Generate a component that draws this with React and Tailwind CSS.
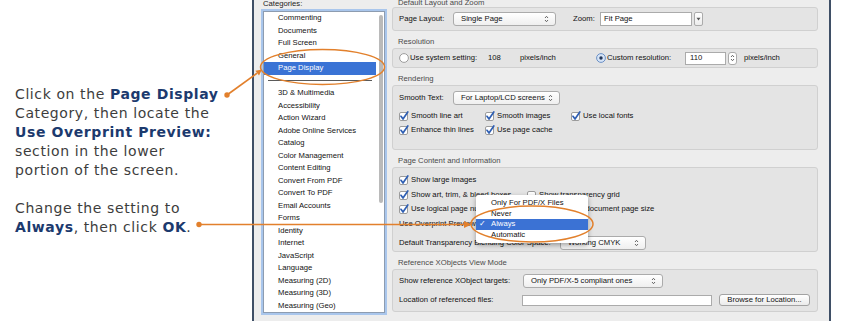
import React from "react";

const ORANGE = "#e2802c";

const Check = ({ on = true }) => (
  <svg width="10" height="10" viewBox="0 0 10 10" className="shrink-0">
    <rect x="0.5" y="1.5" width="8" height="8" rx="1.5" fill="#fff" stroke="#9c9c9c" />
    {on && (
      <path d="M2 5.3 L4 8 L8.8 0.9" fill="none" stroke="#2f5fb3" strokeWidth="1.7" strokeLinecap="round" strokeLinejoin="round" />
    )}
  </svg>
);

const Radio = ({ on }) => (
  <svg width="10" height="10" viewBox="0 0 10 10" className="shrink-0">
    <circle cx="5" cy="5" r="4.4" fill={on ? "#d6e4f6" : "#fff"} stroke={on ? "#6b90c6" : "#9c9c9c"} />
    {on && <circle cx="5" cy="5" r="1.7" fill="#24385a" />}
  </svg>
);

const UpDown = () => (
  <svg width="5" height="8" viewBox="0 0 5 8" className="shrink-0">
    <path d="M1 3 L2.5 1.3 L4 3" fill="none" stroke="#555" strokeWidth="0.9" />
    <path d="M1 5 L2.5 6.7 L4 5" fill="none" stroke="#555" strokeWidth="0.9" />
  </svg>
);

const Select = ({ className, children }) => (
  <div className={`flex h-[14px] shrink-0 items-center justify-between rounded-[3px] border border-[#ababab] bg-gradient-to-b from-white to-[#efefef] pl-[7px] pr-[6px] text-[#111] ${className}`}>
    <span>{children}</span>
    <UpDown />
  </div>
);

const Label = ({ first, children }) => (
  <div className={first ? "mt-[-1px] flex h-[8px] items-end pl-[6px] leading-[9px] text-[#4a4a4a]" : "flex h-[17px] items-end pb-[1px] pl-[6px] leading-[10px] text-[#4a4a4a]"}>
    {children}
  </div>
);

const CheckItem = ({ on, className, children }) => (
  <div className={`flex shrink-0 items-center gap-[2px] ${className}`}>
    <Check on={on} />
    <span>{children}</span>
  </div>
);

const topCats = ["Commenting", "Documents", "Full Screen", "General"];
const otherCats = [
  "3D & Multimedia", "Accessibility", "Action Wizard", "Adobe Online Services", "Catalog",
  "Color Management", "Content Editing", "Convert From PDF", "Convert To PDF", "Email Accounts",
  "Forms", "Identity", "Internet", "JavaScript", "Language", "Measuring (2D)", "Measuring (3D)",
  "Measuring (Geo)",
];

const Annotations = () => (
  <svg className="pointer-events-none absolute left-0 top-0" width="845" height="321" viewBox="0 0 845 321">
    <ellipse cx="322.5" cy="67" rx="62" ry="17.5" fill="none" stroke={ORANGE} strokeWidth="1.5" />
    <ellipse cx="532" cy="224" rx="61" ry="18" fill="none" stroke={ORANGE} strokeWidth="1.5" />
    <circle cx="227" cy="95" r="2.7" fill={ORANGE} />
    <line x1="227" y1="95" x2="257.2" y2="73.1" stroke={ORANGE} strokeWidth="1.7" />
    <polygon points="262,69.5 259,75.5 255.4,70.7" fill={ORANGE} />
    <circle cx="199" cy="224.5" r="2.7" fill={ORANGE} />
    <line x1="199" y1="224.5" x2="465" y2="224.5" stroke={ORANGE} strokeWidth="1.7" />
    <polygon points="471.5,224.5 464,221 464,228" fill={ORANGE} />
  </svg>
);

export default function App() {
  return (
    <div className="relative flex h-[321px] w-[845px] overflow-hidden bg-white">
      {/* instructions */}
      <div className="w-[252px] shrink-0 pl-[15px] pt-[85px] font-['DejaVu_Sans',sans-serif] text-[14px] leading-[19px] tracking-[0.6px] text-[#3d3d3d]">
        <p>
          Click on the <b className="text-[#1c3a6e]">Page Display</b>
          <br />
          Category, then locate the
          <br />
          <b className="text-[#1c3a6e]">Use Overprint Preview:</b>
          <br />
          section in the lower
          <br />
          portion of the screen.
        </p>
        <p className="mt-[19px]">
          Change the setting to
          <br />
          <b className="text-[#1c3a6e]">Always</b>, then click <b className="text-[#1c3a6e]">OK</b>.
        </p>
      </div>

      {/* preferences window */}
      <div className="flex h-full w-[579px] shrink-0 border-x-2 border-[#3f4f66] bg-[#ededed] pl-[9px] pr-[11px] font-['Liberation_Sans',Arial,sans-serif] text-[7.7px] text-[#111]">
        <div className="flex w-[122px] shrink-0 flex-col">
          <div className="mt-[-2px] h-[13px] leading-[11px] text-[#222]">Categories:</div>
          <div className="relative h-[302px] border border-[#8d9cb0] bg-white ring-2 ring-[#a9c6ec]">
            {topCats.map((c) => (
              <div key={c} className="h-[12.5px] pl-[14px] leading-[12.5px]">{c}</div>
            ))}
            <div className="h-[12.5px] w-[112px] bg-[#3a73d5] pl-[14px] leading-[12.5px] text-white">Page Display</div>
            <div className="flex h-[12.5px] items-center pl-[4px]">
              <div className="h-px w-[104px] bg-[#5a5a5a]" />
            </div>
            {otherCats.map((c) => (
              <div key={c} className="h-[12.5px] pl-[14px] leading-[12.5px]">{c}</div>
            ))}
            <div className="absolute right-[1px] top-[3px] h-[188px] w-[4px] rounded-full bg-[#bababa]" />
          </div>
        </div>

        <div className="ml-[7px] flex w-[426px] shrink-0 flex-col">
          <Label first>Default Layout and Zoom</Label>
          <div className="flex h-[24px] items-center rounded-[3px] border border-[#d0d0d0] bg-[#e4e4e4] pl-[6px]">
            <span className="w-[54px] shrink-0">Page Layout:</span>
            <Select className="w-[103px]">Single Page</Select>
            <span className="ml-[17px] w-[27px] shrink-0">Zoom:</span>
            <div className="flex h-[14px] w-[103px] shrink-0 items-center gap-[2px]">
              <div className="flex h-full flex-1 items-center border border-[#ababab] bg-white pl-[3px]">Fit Page</div>
              <div className="flex h-full w-[9px] items-center justify-center rounded-[2px] border border-[#ababab] bg-gradient-to-b from-white to-[#ececec]">
                <svg width="5" height="4" viewBox="0 0 5 4"><path d="M0.5 0.8 L4.5 0.8 L2.5 3.5 Z" fill="#555" /></svg>
              </div>
            </div>
          </div>

          <Label>Resolution</Label>
          <div className="flex h-[20px] items-center rounded-[3px] border border-[#d0d0d0] bg-[#e4e4e4] pl-[6px]">
            <Radio />
            <span className="ml-[1px] w-[78px] shrink-0">Use system setting:</span>
            <span className="w-[32px] shrink-0">108</span>
            <span className="w-[76px] shrink-0">pixels/inch</span>
            <Radio on />
            <span className="ml-[1px] w-[78px] shrink-0">Custom resolution:</span>
            <div className="flex h-[13px] w-[41px] shrink-0 items-center border border-[#ababab] bg-white pl-[4px]">110</div>
            <div className="ml-[2px] flex h-[13px] w-[9px] shrink-0 items-center justify-center rounded-[3px] border border-[#ababab] bg-white">
              <UpDown />
            </div>
            <span className="ml-[7px]">pixels/inch</span>
          </div>

          <Label>Rendering</Label>
          <div className="flex h-[65px] flex-col rounded-[3px] border border-[#d0d0d0] bg-[#e4e4e4] pl-[6px] pt-[5px]">
            <div className="flex h-[14px] items-center">
              <span className="w-[54px] shrink-0">Smooth Text:</span>
              <Select className="w-[107px]">For Laptop/LCD screens</Select>
            </div>
            <div className="mt-[4px] flex h-[14px] items-center">
              <CheckItem className="w-[86px]">Smooth line art</CheckItem>
              <CheckItem className="w-[86px]">Smooth images</CheckItem>
              <CheckItem>Use local fonts</CheckItem>
            </div>
            <div className="flex h-[14px] items-center">
              <CheckItem className="w-[86px]">Enhance thin lines</CheckItem>
              <CheckItem>Use page cache</CheckItem>
            </div>
          </div>

          <Label>Page Content and Information</Label>
          <div className="flex h-[85px] flex-col rounded-[3px] border border-[#d0d0d0] bg-[#e4e4e4] pl-[6px] pt-[5px]">
            <div className="flex h-[14.5px] items-center">
              <CheckItem>Show large images</CheckItem>
            </div>
            <div className="flex h-[14.5px] items-center">
              <CheckItem className="w-[128px]">Show art, trim, &amp; bleed boxes</CheckItem>
              <CheckItem on={false}>Show transparency grid</CheckItem>
            </div>
            <div className="flex h-[14.5px] items-center">
              <CheckItem className="w-[128px]">Use logical page numbers</CheckItem>
              <CheckItem on={false}>Always show document page size</CheckItem>
            </div>
            <div className="flex h-[14.5px] items-center">
              <span>Use Overprint Preview:</span>
            </div>
            <div className="mt-[5px] flex h-[14px] items-center">
              <span className="w-[161px] shrink-0">Default Transparency Blending Color Space:</span>
              <Select className="w-[86px]">Working CMYK</Select>
            </div>
          </div>

          <Label>Reference XObjects View Mode</Label>
          <div className="flex h-[43px] flex-col rounded-[3px] border border-[#d0d0d0] bg-[#e4e4e4] pl-[6px] pt-[4px]">
            <div className="flex h-[14px] items-center">
              <span className="w-[124px] shrink-0">Show reference XObject targets:</span>
              <Select className="w-[140px]">Only PDF/X-5 compliant ones</Select>
            </div>
            <div className="mt-[6px] flex h-[12px] items-center">
              <span className="w-[123px] shrink-0">Location of referenced files:</span>
              <div className="h-[11px] w-[190px] shrink-0 border border-[#ababab] bg-white" />
              <div className="ml-[7px] flex h-[12px] w-[91px] shrink-0 items-center justify-center rounded-[3px] border border-[#a2a2a2] bg-gradient-to-b from-white to-[#ebebeb]">
                Browse for Location...
              </div>
            </div>
          </div>
        </div>
      </div>

      {/* popup menu */}
      <div className="absolute left-[476px] top-[195px] w-[112px] rounded-[3px] bg-white py-[3px] font-['Liberation_Sans',Arial,sans-serif] text-[7.7px] text-[#111] shadow-[0_2px_5px_rgba(0,0,0,0.35)]">
        <div className="h-[10.5px] pl-[15px] leading-[10.5px]">Only For PDF/X Files</div>
        <div className="h-[10.5px] pl-[15px] leading-[10.5px]">Never</div>
        <div className="flex h-[10.5px] items-center bg-[#3b72d4] leading-[10.5px] text-white">
          <span className="w-[15px] pl-[3px]">✓</span>
          <span>Always</span>
        </div>
        <div className="h-[10.5px] pl-[15px] leading-[10.5px]">Automatic</div>
      </div>

      <Annotations />
    </div>
  );
}
